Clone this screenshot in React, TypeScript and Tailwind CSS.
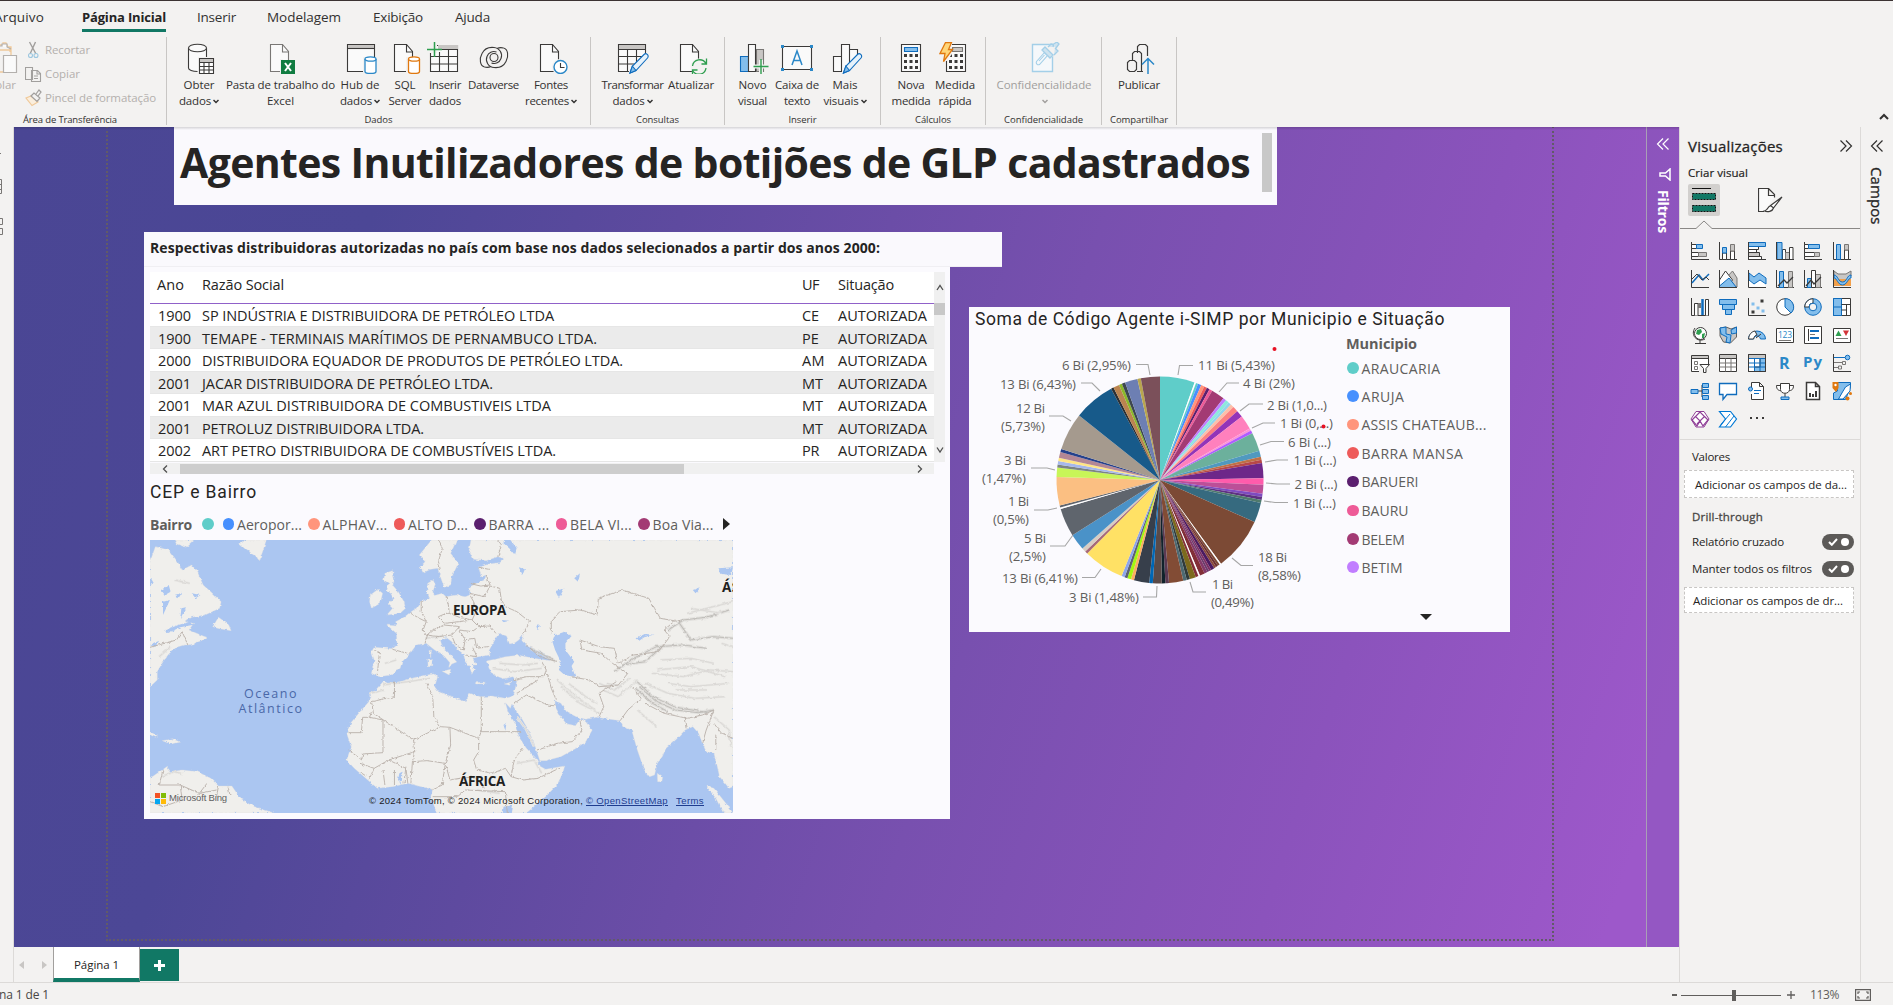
import { useLayoutEffect, useRef, useState, type ReactNode } from "react";

/* Single-line label whose tracking is adjusted so that it spans `w` pixels. */
function Fit({ w, children, className = "" }: { w: number; children: string; className?: string }) {
  const ref = useRef<HTMLSpanElement>(null);
  const [ls, setLs] = useState(0);
  useLayoutEffect(() => {
    const el = ref.current;
    if (!el) return;
    const natural = el.getBoundingClientRect().width - ls * children.length;
    setLs((w - natural) / children.length);
  }, [w, children]);
  return (
    <span ref={ref} className={"inline-block self-center whitespace-pre " + className} style={{ letterSpacing: ls }}>
      {children}
    </span>
  );
}

const K = "#3b3a39";
const B = "#0f6cbd";
const L = "#83beec";
const G = "#c8c6c4";

/* ---------- Ribbon icons (32 x 32) ---------- */
function Ico({ children, dx = "" }: { children: ReactNode; dx?: string }) {
  return (
    <svg width="32" height="32" viewBox="0 0 32 32" fill="none" stroke={K} strokeWidth="1.1" className={"shrink-0 " + dx}>
      {children}
    </svg>
  );
}
const Page = ({ x = 2, c = K }: { x?: number; c?: string }) => (
  <g transform={`translate(${x} 0)`} stroke={c}>
    <path d="M1.5 2.5h12l6 7v20h-18z" fill="#fafafa" />
    <path d="M13.5 2.5v7.500h6" />
  </g>
);
const Cyl = ({ x, c }: { x: number; c: string }) => (
  <g transform={`translate(${x} 0)`} stroke={c} strokeWidth="1.3">
    <path d="M1 17v12.500c0 1.200 2.600 2 5.500 2s5.500-.8 5.500-2V17" fill="#fff" />
    <ellipse cx="6.500" cy="17" rx="5.500" ry="2.200" fill="#fff" />
  </g>
);
const pencil = (
  <g stroke={B}>
    <path d="M14 31l2.500-7L28 12.500c2-2 5.500.5 3.500 3.500L20 28.500z" fill="#e6f2fb" />
    <path d="M14 31l2.300-7 3.700 4.500z" fill={L} />
  </g>
);
const icons: Record<string, ReactNode> = {
  obter: (
    <Ico>
      <path d="M5.500 6v20c0 2 4 3.500 9 3.500h9.500V6" fill="#fafafa" stroke="none" />
      <path d="M5.500 6v20c0 2 4 3.500 9 3.500M23.500 6v9" />
      <ellipse cx="14.500" cy="6" rx="9" ry="3.800" fill="#fafafa" />
      <path d="M15 15h17v17H15z" fill="#f3f2f1" stroke="none" />
      <path d="M16.500 16.500h14v15h-14z" fill="#fff" />
      <path d="M17 17h13v3H17z" fill={G} stroke="none" />
      <path d="M16.500 20.500h14M16.500 24.500h14M16.500 28h14M21 20v11.500M26 20v11.500" />
    </Ico>
  ),
  excel: (
    <Ico dx="translate-x-[3px]">
      <Page x={1} c="#797775" />
      <path d="M12 17h3v14h-3z" fill="#f3f2f1" stroke="none" />
      <path d="M13 18h14v14H13z" fill="#107c41" stroke="none" />
      <path d="M17 21l6 8M23 21l-6 8" stroke="#fff" strokeWidth="2" />
    </Ico>
  ),
  hub: (
    <Ico dx="translate-x-[2px]">
      <path d="M1.500 2.500h27v27h-27z" fill="#fafafa" />
      <path d="M2 3h26v3.500H2z" fill={G} stroke="none" />
      <path d="M1.500 6.500h27" />
      <path d="M17 15h15v17H17z" fill="#f3f2f1" stroke="none" />
      <Cyl x={18} c="#2b88c8" />
    </Ico>
  ),
  sql: (
    <Ico dx="translate-x-[2px]">
      <Page x={2} />
      <path d="M15 15h15v17H15z" fill="#f3f2f1" stroke="none" />
      <Cyl x={16.500} c="#e0780f" />
    </Ico>
  ),
  inserir: (
    <Ico dx="-translate-x-[2px]">
      <path d="M3.500 3.500h27v26h-27z" fill="#fafafa" />
      <path d="M11 3h20v4H11z" fill={G} stroke="none" />
      <path d="M12 7.500h18.500M3.500 14.500h27M3.500 22h27M12.500 10v19.500M21.500 7.500v22" />
      <path d="M0 1h10v10H0z" fill="#f3f2f1" stroke="none" />
      <path d="M7.500 0v15M0 7.500h15" stroke="#2e9e4f" strokeWidth="1.500" />
    </Ico>
  ),
  dataverse: (
    <Ico>
      <path d="M25.500 6C30 7 31 14 28 19.500c-2.500 5-7.500 6.500-12 6C10.500 25 7 19.500 9 14.500c1.500-4 5.500-6 9.500-4.500M6.500 25C2 24 1 17 4 11.500c2.500-5 7.500-6.500 12-6 5.500.5 9 6 7 11-1.500 4-5.500 6-9.500 4.500" />
      <path d="M25.500 6c-3-.8-5-.2-6.500.500M6.500 25c3 .8 5 .2 6.500-.5" />
      <circle cx="16" cy="15.500" r="4" />
    </Ico>
  ),
  fontes: (
    <Ico dx="translate-x-[3px]">
      <Page x={1} />
      <circle cx="22" cy="25" r="8" fill="#f3f2f1" stroke="none" />
      <circle cx="22.500" cy="25" r="6.500" fill="#fff" stroke="#2b88c8" strokeWidth="1.400" />
      <path d="M22.500 21v4.500h4" />
    </Ico>
  ),
  transformar: (
    <Ico>
      <path d="M1.500 2.500h27v27h-27z" fill="#fafafa" />
      <path d="M2 3h26v4H2z" fill={G} stroke="none" />
      <path d="M1.500 7.500h27M1.500 14.500h27M1.500 22h27M10.500 7.500v22M19.500 7.500v22" />
      <path d="M30 10L12 28v4h20z" fill="#f3f2f1" stroke="none" />
      <g transform="translate(-1 0)">{pencil}</g>
    </Ico>
  ),
  atualizar: (
    <Ico dx="translate-x-[2px]">
      <Page x={2} />
      <circle cx="22" cy="25" r="8.500" fill="#f3f2f1" stroke="none" />
      <path d="M15.500 24c1-7 10-8.500 13.500-2.500M29.500 16.500v5.500h-5M29 26c-1 7-10 8.500-13.500 2.500M15.500 33v-5h5" stroke="#2e9e4f" strokeWidth="1.300" />
    </Ico>
  ),
  novo: (
    <Ico>
      <path d="M19.500 7.500h7v22h-7z" fill={G} stroke="#797775" />
      <path d="M3.500 14.500h8v15h-8z" fill={L} stroke={B} />
      <path d="M11.500 2.500h7v27h-7z" fill="#fafafa" />
      <path d="M24 18v14M17 24.500h15" stroke="#f3f2f1" strokeWidth="4" />
      <path d="M24 17v15M16.500 24.500h15" stroke="#2e9e4f" strokeWidth="1.400" />
    </Ico>
  ),
  caixa: (
    <Ico>
      <path d="M1.500 4.500h29v23h-29z" fill="#fafafa" />
      <path d="M11 23l5-14 5 14M12.800 18.500h6.500" stroke="#2b88c8" strokeWidth="1.500" />
      <path d="M0 3h3v3H0zM29 3h3v3h-3zM0 26h3v3H0zM29 26h3v3h-3z" fill="#2b88c8" stroke="none" />
    </Ico>
  ),
  mais: (
    <Ico dx="translate-x-[2px]">
      <path d="M2.500 14.500h8v15h-8zM18.500 7.500h8v22h-8zM10.500 2.500h8v27h-8z" fill="#fafafa" />
      <path d="M30 10L11 29v3h21z" fill="#f3f2f1" stroke="none" />
      <g transform="translate(-1.500 0)">{pencil}</g>
    </Ico>
  ),
  nova: (
    <Ico>
      <path d="M6.500 2.500h19v27h-19z" fill="#fafafa" />
      <path d="M9.500 5.500h13v4h-13z" fill={L} stroke={B} />
      <path d="M9 12h3v3H9zm5.500 0h3v3h-3zm5.500 0h3v3h-3zM9 18h3v3H9zm5.500 0h3v3h-3zm5.500 0h3v3h-3zM9 24h3v3H9zm5.500 0h3v3h-3zm5.500 0h3v3h-3z" fill={K} stroke="none" />
    </Ico>
  ),
  rapida: (
    <Ico>
      <path d="M7.500 2.500h19v27h-19z" fill="#fafafa" />
      <path d="M13.500 5.500h10v4h-10z" fill={G} stroke="#797775" />
      <path d="M10 12h3v3h-3zm5.500 0h3v3h-3zm5.500 0h3v3h-3zM10 18h3v3h-3zm5.500 0h3v3h-3zm5.500 0h3v3h-3zM10 24h3v3h-3zm5.500 0h3v3h-3zm5.500 0h3v3h-3z" fill={K} stroke="none" />
      <path d="M0 0h13v12l-5 7H0z" fill="#f3f2f1" stroke="none" />
      <path d="M6.500.5h6l-3 7h4L4.500 19.500l1.500-8H1z" fill="#ffd679" stroke="#e0780f" strokeWidth="1.300" />
    </Ico>
  ),
  conf: (
    <Ico>
      <g stroke="#a3cfe8">
        <path d="M4.500 2.500h20v27h-20z" fill="#f5f8fb" strokeWidth="1.400" />
        <path d="M14 6l12-5 5 9-10 7z" fill="#f3f2f1" stroke="none" />
        <path d="M8.500 19.500l8-9 3 3-8 9c-2 1-4-1-3-3zM11 19l5.500-6" />
        <path d="M17 5l8 8-3 3-8-8zM20 5l3-3c2 0 3 1 2 3M24 3l5-3 2 2-3 4M27 6l3 3-4 4" fill="#cfe3ef" strokeWidth="1.300" />
      </g>
    </Ico>
  ),
  publicar: (
    <Ico>
      <path d="M14.500 11V4.500l2-2h6l2 2V14M9.500 18v-6.500l2-2h5l2 2V29M4.500 27.500v-7l2-2h5l2 2v7l-2 2h-5zM14 29.500h6" strokeWidth="1.200" />
      <path d="M25 32V17M19 22.500l6-6 6 6" stroke="#2b88c8" strokeWidth="1.500" />
    </Ico>
  ),
};

const Chev = ({ dim = false }: { dim?: boolean }) => (
  <svg width="6" height="5" viewBox="0 0 6 5" fill="none" stroke={dim ? "#a19f9d" : "#323130"} strokeWidth="1.400" className="ml-[2px] shrink-0">
    <path d="M.5 1L3 3.600 5.500 1" />
  </svg>
);

type Item = { icon: string; box: string; a: [string, number]; b?: [string, number]; chev?: boolean; dim?: boolean };
type Group = { label: [string, number]; w: string; items: Item[] };
const groups: Group[] = [
  {
    label: ["Dados", 28], w: "w-[424px]",
    items: [
      { icon: "obter", box: "ml-[10px] w-[44px]", a: ["Obter", 31], b: ["dados", 32], chev: true },
      { icon: "excel", box: "ml-[5px] w-[109px]", a: ["Pasta de trabalho do", 109], b: ["Excel", 27] },
      { icon: "hub", box: "ml-[3px] w-[44px]", a: ["Hub de", 39], b: ["dados", 32], chev: true },
      { icon: "sql", box: "ml-[6px] w-[34px]", a: ["SQL", 21], b: ["Server", 33] },
      { icon: "inserir", box: "ml-[6px] w-[34px]", a: ["Inserir", 32], b: ["dados", 32] },
      { icon: "dataverse", box: "ml-[6px] w-[51px]", a: ["Dataverse", 51] },
      { icon: "fontes", box: "ml-[5px] w-[54px]", a: ["Fontes", 34], b: ["recentes", 44], chev: true },
    ],
  },
  {
    label: ["Consultas", 43], w: "w-[134px]",
    items: [
      { icon: "transformar", box: "ml-[10px] w-[63px]", a: ["Transformar", 62], b: ["dados", 32], chev: true },
      { icon: "atualizar", box: "ml-[4px] w-[46px]", a: ["Atualizar", 46] },
    ],
  },
  {
    label: ["Inserir", 28], w: "w-[156px]",
    items: [
      { icon: "novo", box: "ml-[13px] w-[29px]", a: ["Novo", 28], b: ["visual", 29] },
      { icon: "caixa", box: "ml-[8px] w-[44px]", a: ["Caixa de", 44], b: ["texto", 26] },
      { icon: "mais", box: "ml-[4px] w-[44px]", a: ["Mais", 25], b: ["visuais", 35], chev: true },
    ],
  },
  {
    label: ["Cálculos", 36], w: "w-[105px]",
    items: [
      { icon: "nova", box: "ml-[10px] w-[40px]", a: ["Nova", 27], b: ["medida", 39] },
      { icon: "rapida", box: "ml-[4px] w-[40px]", a: ["Medida", 40], b: ["rápida", 33] },
    ],
  },
  {
    label: ["Confidencialidade", 79], w: "w-[116px]",
    items: [{ icon: "conf", box: "ml-[10px] w-[96px]", a: ["Confidencialidade", 95], b: ["", 0], chev: true, dim: true }],
  },
  { label: ["Compartilhar", 58], w: "w-[75px]", items: [{ icon: "publicar", box: "ml-[16px] w-[42px]", a: ["Publicar", 42] }] },
];

function Ribbon() {
  return (
    <header className="relative z-20 flex h-[127px] flex-col overflow-hidden border-t border-[#3b3333] bg-[#f3f2f1] text-[#323130]">
      <nav className="flex h-[31px] shrink-0 text-[13.5px] leading-[33px]">
        <div className="ml-[-6px] w-[88px]"><Fit w={50}>Arquivo</Fit></div>
        <div className="w-[115px]">
          <div className="h-[31px] w-[84px] border-b-[3px] border-[#117865] font-bold leading-[32px] text-[#252423]"><Fit className="text-[13px]" w={84}>Página Inicial</Fit></div>
        </div>
        <div className="w-[70px]"><Fit w={39}>Inserir</Fit></div>
        <div className="w-[106px]"><Fit w={74}>Modelagem</Fit></div>
        <div className="w-[82px]"><Fit w={50}>Exibição</Fit></div>
        <div><Fit w={35}>Ajuda</Fit></div>
      </nav>
      <div className="mt-[5px] flex h-[88px] shrink-0 text-[11.5px] leading-4">
        <section className="flex w-[167px] flex-col border-r border-[#c8c6c4]">
          <div className="flex h-[77px] shrink-0 text-[#b3b0ad]">
            <div className="w-[28px]">
              <svg width="18" height="38" viewBox="0 0 18 38" fill="none" className="mt-[4px]">
                <path d="M0 4h3V2h3l2 4h2v5M0 9h10M0 31h3M8 6h3v8" stroke="#f0c99a" strokeWidth="1.300" />
                <path d="M0 5h2V3h5v3l4 2M3.500 14.500h13v17h-13z" fill="#fafafa" stroke="#b3b0ad" strokeWidth="1.200" />
              </svg>
              <div className="-ml-[12px] -mt-[3px] leading-[18px]"><Fit w={28}>Colar</Fit></div>
            </div>
            <div className="flex flex-col">
              <div className="flex h-[25px] items-center">
                <svg width="17" height="18" viewBox="0 0 17 18" fill="none" strokeWidth="1.100">
                  <path d="M1.500 1L8 13M7.500 1L2 13" stroke="#a19f9d" strokeWidth="1.400" />
                  <circle cx="2.500" cy="14.500" r="2" stroke="#9cc7e0" /><circle cx="8" cy="14.500" r="2" stroke="#9cc7e0" />
                </svg>
                <Fit w={45}>Recortar</Fit>
              </div>
              <div className="flex h-[24px] items-center">
                <svg width="20" height="18" viewBox="0 0 20 18" fill="#f3f2f1" stroke="#a19f9d" strokeWidth="1.100" className="-ml-[3px]">
                  <path d="M.5 2.500h7v12h-7zM6.500 5.500h6l3 3v8h-9zM12 5.500v3.500h3.500M9 11h4M9 13.500h4" />
                </svg>
                <Fit w={35}>Copiar</Fit>
              </div>
              <div className="flex h-[24px] items-center">
                <svg width="20" height="18" viewBox="0 0 20 18" fill="none" strokeWidth="1.200" className="-ml-[3px]">
                  <path d="M1 9l5-2 7 6-6 3.500z" stroke="#f0c99a" fill="#faeedd" /><path d="M6 7l3-3 6 5-3 3.500zM11 5l3-4 2 2-3 4" stroke="#a19f9d" fill="#f3f2f1" />
                </svg>
                <Fit w={111}>Pincel de formatação</Fit>
              </div>
            </div>
          </div>
          <div className="flex h-[12px] shrink-0 pl-[23px] text-[9.5px] leading-[12px]"><Fit w={94}>Área de Transferência</Fit></div>
        </section>
        {groups.map((g) => (
          <section key={g.label[0]} className={"flex shrink-0 flex-col border-r border-[#c8c6c4] " + g.w}>
            <div className="flex h-[77px] shrink-0 pt-[5px]">
              {g.items.map((it) => (
                <div key={it.icon} className={"flex shrink-0 flex-col items-center " + it.box + (it.dim ? " text-[#a19f9d]" : "")}>
                  {icons[it.icon]}
                  <div className="mt-[3px] flex h-4"><Fit w={it.a[1]}>{it.a[0]}</Fit></div>
                  {it.b && (
                    <div className="flex h-4 items-center">
                      {it.b[0] && <Fit w={it.b[1]}>{it.b[0]}</Fit>}
                      {it.chev && <Chev dim={it.dim} />}
                    </div>
                  )}
                </div>
              ))}
            </div>
            <div className="flex h-[12px] shrink-0 justify-center text-[9.5px] leading-[12px]"><Fit w={g.label[1]}>{g.label[0]}</Fit></div>
          </section>
        ))}
        <div className="flex flex-1 items-end justify-end pb-[4px] pr-[4px]">
          <svg width="10" height="8" viewBox="0 0 10 8" fill="none" stroke="#323130" strokeWidth="2"><path d="M1 6l4-4 4 4" /></svg>
        </div>
      </div>
    </header>
  );
}

/* ---------- Table visual ---------- */
const rows: [string, string, number, string][] = [
  ["1900", "SP INDÚSTRIA E DISTRIBUIDORA DE PETRÓLEO LTDA", 352, "CE"],
  ["1900", "TEMAPE - TERMINAIS MARÍTIMOS DE PERNAMBUCO LTDA.", 395, "PE"],
  ["2000", "DISTRIBUIDORA EQUADOR DE PRODUTOS DE PETRÓLEO LTDA.", 421, "AM"],
  ["2001", "JACAR DISTRIBUIDORA DE PETRÓLEO LTDA.", 291, "MT"],
  ["2001", "MAR AZUL DISTRIBUIDORA DE COMBUSTIVEIS LTDA", 349, "MT"],
  ["2001", "PETROLUZ DISTRIBUIDORA LTDA.", 222, "MT"],
  ["2002", "ART PETRO DISTRIBUIDORA DE COMBUSTÍVEIS LTDA.", 354, "PR"],
];
const Arrow = ({ d }: { d: string }) => (
  <svg width="10" height="10" viewBox="0 0 10 10" fill="none" stroke="#505050" strokeWidth="1.300"><path d={d} /></svg>
);

function Table() {
  return (
    <div className="ml-[6px] mt-[5px] w-[795px] text-[14.5px] text-[#252423]">
      <div className="flex h-[190px]">
        <div className="w-[784px] bg-white">
          <div className="flex h-[32px] border-b border-[#9061c9] pl-[7px] leading-[25px]">
            <div className="flex h-[25px] w-[45px]"><Fit w={27}>Ano</Fit></div>
            <div className="flex h-[25px] w-[600px]"><Fit w={82}>Razão Social</Fit></div>
            <div className="flex h-[25px] w-[36px]"><Fit w={17}>UF</Fit></div>
            <div className="flex h-[25px]"><Fit w={56}>Situação</Fit></div>
          </div>
          {rows.map((r, i) => (
            <div key={r[1]} className={"flex h-[22.5px] border-b border-[#e6e6e6] pl-[8px] leading-[23px] " + (i % 2 ? "bg-[#ebebeb]" : "bg-white")}>
              <div className="w-[44px]"><Fit w={33}>{r[0]}</Fit></div>
              <div className="w-[600px]"><Fit w={r[2]}>{r[1]}</Fit></div>
              <div className="w-[36px]"><Fit w={r[3] === "AM" ? 23 : r[3] === "MT" ? 21 : 17}>{r[3]}</Fit></div>
              <div><Fit w={89}>AUTORIZADA</Fit></div>
            </div>
          ))}
        </div>
        <div className="flex w-[11px] flex-col items-center bg-[#f0f0f0]">
          <div className="flex h-[31px] items-center"><Arrow d="M2 7l3-4.500L8 7" /></div>
          <div className="h-[12px] w-full bg-[#c8c8c8]" />
          <div className="mt-auto pb-[7px]"><Arrow d="M2 2.500L5 7l3-4.500" /></div>
        </div>
      </div>
      <div className="mt-[1px] flex h-[11px] w-[784px] items-center bg-[#f0f0f0]">
        <div className="flex w-[30px] shrink-0 justify-center"><Arrow d="M7 1.500L3.500 5 7 8.500" /></div>
        <div className="h-[10px] w-[504px] shrink-0 bg-[#cdcdcd]" />
        <div className="ml-auto mr-[9px]"><Arrow d="M3 1.500L6.500 5 3 8.500" /></div>
      </div>
    </div>
  );
}

/* ---------- Map visual ---------- */
const mainland =
  "M865 30L860 60L872 88L905 92L935 80L950 85L938 98L912 102L885 112L892 140L905 135L900 150L880 160L862 170L862 195L850 200L825 195L800 200L790 190L772 196L765 186L772 165L766 150L752 160L750 185L757 205L735 215L722 235L705 248L690 262L668 275L672 288L645 285L655 295L670 310L672 345L660 356L612 352L605 365L612 390L605 430L625 440L655 435L680 415L685 395L705 372L722 345L748 340L770 360L795 378L810 398L806 415L815 402L828 396L812 375L790 350L785 330L800 322L815 335L830 358L845 372L850 395L862 412L868 434L874 420L870 405L880 405L870 385L885 380L915 375L912 362L920 345L930 325L938 310L958 318L966 342L980 338L990 330L1002 312L998 332L1010 345L1035 360L1065 375L1072 392L1030 385L990 376L955 380L935 386L908 392L912 415L925 435L950 446L975 440L985 455L978 490L970 500L955 505L920 498L890 500L862 490L850 515L815 500L780 485L770 470L778 440L768 432L750 435L710 445L660 462L635 455L620 475L600 500L598 515L575 545L550 580L540 610L552 650L540 690L560 715L590 745L620 775L660 770L700 760L735 770L765 778L760 800L768 825L775 849L1010 849L1060 800L1090 765L1105 730L1110 708L1060 718L1045 708L1035 685L1010 655L990 620L980 580L962 545L955 518L968 535L972 522L985 545L1000 570L1015 600L1030 640L1045 692L1060 692L1100 680L1140 655L1165 635L1182 600L1165 575L1150 568L1138 587L1115 582L1100 560L1085 530L1085 512L1100 520L1115 545L1140 560L1165 568L1195 562L1210 565L1255 572L1262 590L1285 600L1290 620L1300 660L1318 720L1332 740L1345 735L1352 700L1365 680L1375 655L1400 630L1425 600L1445 590L1460 610L1470 640L1480 665L1500 670L1507 700L1515 740L1540 775L1550 770V30Z";
const lands = [
  mainland,
  "M26 95L40 50L75 60L98 95L110 120L135 105L150 125L165 165L185 185L212 215L208 235L170 255L135 262L118 275L140 280L128 300L165 318L175 322L160 332L130 345L115 345L95 352L75 372L60 395L45 425L45 450L26 470Z",
  "M190 290L205 262L215 270L232 285L238 302L215 298Z",
  "M90 30L140 30L120 52L95 42Z",
  "M260 42L272 30L330 30L322 60L312 92L300 75L280 62Z",
  "M640 130L660 122L665 150L660 165L675 185L690 215L694 235L680 250L645 255L660 235L648 222L662 205L655 190L645 182L650 160L637 150Z",
  "M602 195L622 178L634 190L628 220L605 235L600 215Z",
  "M762 30L828 30L812 70L832 100L815 140L812 165L795 172L785 140L778 115L760 118L740 128L732 110L745 95L730 75Z",
  "M790 424L812 418L808 435Z",
  "M752 388L764 386L762 410L753 410Z",
  "M755 362L762 360L760 380Z",
  "M876 458L900 456L902 461L878 462Z",
  "M952 462L970 456L966 466Z",
  "M1352 730L1366 742L1364 755L1353 755Z",
  "M1480 768L1500 775L1535 825L1550 849L1525 849L1505 805Z",
  "M26 745L45 730L70 710L80 725L110 720L150 725L185 745L205 768L240 768L262 805L300 830L350 849L26 849Z",
  "M58 632L85 626L104 636L80 642Z",
  "M26 605L46 618L40 622L26 614Z",
];
const waters = [
  "M1085 315L1110 305L1128 318L1112 340L1112 360L1135 395L1128 408L1138 440L1115 440L1095 420L1100 395L1085 360L1078 335Z",
  "M968 30L985 55L980 75L965 55L950 40L952 30Z",
  "M1298 325L1322 312L1345 314L1318 322L1305 332Z",
  "M1085 182L1108 176L1095 205Z",
  "M1135 145L1150 130L1145 155Z",
  "M990 112L1006 118L1000 134Z",
  "M1035 290L1045 285L1040 302Z",
  "M1512 115L1550 112L1545 135L1520 132Z",
  "M1445 180L1466 172L1452 190Z",
  "M945 270L965 272L950 277Z",
  "M55 180L75 165L80 185L65 195Z",
  "M90 195L110 188L100 205Z",
  "M135 190L158 195L145 205Z",
  "M60 215L78 210L60 255Z",
  "M108 235L120 232L105 268Z",
  "M66 300L100 285L130 275L140 284L105 292L72 310Z",
  "M678 730L686 725L684 760L674 750Z",
  "M950 585L958 578L955 602Z",
  "M950 830L975 826L972 849L948 849Z",
  "M26 345L50 332L40 350Z",
  "M26 140L36 160L26 165Z",
];
const borders =
  "M780 30L790 55L780 95L785 120M935 30L945 45L935 80M885 112L912 118M860 160L890 168L915 165L905 135M862 190L900 200L915 168L940 175L945 215L955 230L985 245L1018 275L1012 290L1000 312M800 200L806 225L808 250L835 262L868 270L880 240L872 215L862 195M735 215L735 245L748 275L740 300L750 320L745 340M705 248L730 265L748 275M780 260L800 250L808 250M780 262L795 280L835 275L868 270L885 290L915 288L930 310M750 315L780 320L815 315L835 290L795 285L765 300ZM815 318L825 345L845 360L850 330L835 300L868 305L880 295M845 330L875 325L880 355L910 350M850 375L880 380L870 350M625 375L620 435M612 360L630 372M660 358L705 372M1075 310L1075 275L1100 245L1150 240L1195 255L1198 205L1260 180L1330 205L1345 235L1360 265L1410 275M1125 440L1175 450L1200 470L1250 465L1275 430L1235 400L1205 370L1155 360L1150 330L1200 350L1240 355L1250 400L1290 375L1355 365L1385 320L1370 300L1400 270M1010 345L1045 380L1090 395M1050 395L1062 420L1055 440L1010 440L975 450M1065 432L1075 475L1088 510M985 490L1040 450M978 520L1010 495L1065 525L1088 528M1040 660L1090 640L1130 635L1155 600L1150 572M1200 560L1212 530L1200 490L1245 455M1255 572L1275 540L1310 505L1285 470M1320 520L1370 550L1430 565L1470 555L1500 540M1425 560L1430 595M1500 540L1480 600L1470 640M1500 580L1520 610L1550 625M1505 615L1505 660M892 500L892 605L998 605M892 605L885 625L810 592L785 590L768 560L765 500L750 460M885 625L885 665L872 690L880 720M610 550L605 515L665 500L665 455M610 550L715 630L785 590M605 545L600 562L582 562L578 608L545 608M600 562L635 570L635 668L582 672L580 690L545 660M715 630L718 665L650 690L612 715L575 700M810 592L812 645L798 700L810 750L835 745M718 665L712 695L750 692L798 700M712 695L708 760M650 690L695 715L700 760M635 720L640 765M612 715L600 745L580 730M665 720L665 765M695 710L690 760M880 720L920 730L955 715L970 740L1000 750L1040 745L1095 715M970 740L978 690L1000 655M765 800L830 800L850 780L955 785L960 849M798 700L790 765L765 778M835 745L880 740L900 775M26 352L95 330L110 305L125 345M60 720L50 765L105 765L110 810L60 830M105 765L155 790L175 760M155 790L200 780M205 768L200 800M230 770L235 795M26 815L60 830";
const relief =
  "M1240 425L1290 385L1350 350L1420 345L1480 355M1260 405L1320 395L1370 345M1305 470L1350 515L1400 540L1460 548L1500 540M1295 450L1340 500L1400 532L1470 545M1380 300L1420 270L1480 262L1540 240M1410 280L1440 330L1500 320L1550 325M1020 355L1085 392M1295 475L1340 520L1380 545";
const softRelief =
  "M1320 460L1380 490L1450 505L1530 500M1340 430L1420 440L1490 420L1550 425M1090 450L1140 500L1190 540M1100 470L1150 520L1200 550M1120 460L1165 500L1195 520M920 415L980 425L1050 415M940 400L1000 405L1040 400M745 325L790 318M635 465L700 455L760 445M1360 390L1440 385L1500 400M1380 460L1440 470L1540 460M1210 480L1250 500L1300 450M1220 460L1260 470M55 740L90 725L110 730M985 700L1030 690L1050 730M1350 420L1440 410L1530 440M1200 460L1240 480L1280 445M1520 340L1550 350M1430 250L1550 215M1500 560L1540 600L1545 650M1440 235L1520 250M640 400L670 390M50 380L80 350M90 150L130 160M985 560L1010 600L1030 650M1300 540L1350 590M880 780L940 790M600 490L640 480M1400 480L1480 480";

function WorldMap() {
  return (
    <div className="relative ml-[6px] h-[273px] w-[583px] overflow-hidden bg-[#abc6f1]">
      <svg width="583" height="273" viewBox="26 30 1524 819" preserveAspectRatio="none" className="block">
        <filter id="coast" x="0" y="0" width="1" height="1">
          <feTurbulence type="fractalNoise" baseFrequency="0.090" numOctaves="3" seed="4" />
          <feDisplacementMap in="SourceGraphic" scale="9" xChannelSelector="R" yChannelSelector="G" />
        </filter>
        <g filter="url(#coast)">
          <path d="M0 0H1580V880H0z" fill="#abc6f1" />
          <g fill="#f0efec" stroke="#dcdde0" strokeWidth="1">
            {lands.map((d) => <path key={d} d={d} />)}
          </g>
          <path d={relief} fill="none" stroke="#dbdad7" strokeWidth="10" opacity="0.700" />
          <path d={relief} fill="none" stroke="#c0beba" strokeWidth="3" />
          <path d={softRelief} fill="none" stroke="#e6e5e2" strokeWidth="7" />
          <path d={softRelief} fill="none" stroke="#d6d4d1" strokeWidth="2" />
          <g fill="#abc6f1">{waters.map((d) => <path key={d} d={d} />)}</g>
          <path d={borders} fill="none" stroke="#bab2ab" strokeWidth="2.600" strokeLinejoin="round" />
        </g>
      </svg>
      <div className="absolute left-[303px] top-[58px] text-[13.500px] font-bold leading-6 text-[#1f1f1f]"><Fit w={53}>EUROPA</Fit></div>
      <div className="absolute left-[309px] top-[229px] text-[13.500px] font-bold leading-6 text-[#1f1f1f]"><Fit w={46}>ÁFRICA</Fit></div>
      <div className="absolute left-[572px] top-[35px] text-[13.500px] font-bold leading-6 text-[#1f1f1f]"><Fit w={32}>ÁSIA</Fit></div>
      <div className="absolute left-[80px] top-[146px] w-[82px] text-center text-[12.500px] leading-[15px] text-[#4a68a8]">
        <Fit w={54}>Oceano</Fit>
        <Fit w={65}>Atlântico</Fit>
      </div>
      <div className="absolute bottom-[9px] left-[5px] flex items-center gap-[3px]">
        <div className="grid grid-cols-2 gap-px">
          <i className="size-[5px] bg-[#f35325]" /><i className="size-[5px] bg-[#81bc06]" /><i className="size-[5px] bg-[#05a6f0]" /><i className="size-[5px] bg-[#ffba08]" />
        </div>
        <Fit w={58} className="font-['Liberation_Sans'] text-[9.500px] leading-[12px] text-[#60605f]">Microsoft Bing</Fit>
      </div>
      <div className="absolute bottom-[6px] left-[219px] flex font-['Liberation_Sans'] text-[9.500px] leading-[13px] text-[#1a1a1a]">
        <Fit w={217}>© 2024 TomTom, © 2024 Microsoft Corporation, </Fit>
        <Fit w={82} className="text-[#1f3d8f] underline">© OpenStreetMap</Fit>
        <Fit w={28} className="ml-[8px] text-[#1f3d8f] underline">Terms</Fit>
      </div>
    </div>
  );
}

const bairros: [string, string, number, string][] = [
  ["bg-[#5fcdc9]", "", 0, "ml-[10px]"],
  ["bg-[#4790fe]", "Aeropor...", 65, "ml-[9px]"],
  ["bg-[#ff957c]", "ALPHAV...", 65, "ml-[6px]"],
  ["bg-[#ee5a5a]", "ALTO D...", 60, "ml-[6px]"],
  ["bg-[#5b1f6f]", "BARRA ...", 61, "ml-[6px]"],
  ["bg-[#ee5b97]", "BELA VI...", 62, "ml-[6px]"],
  ["bg-[#a33a74]", "Boa Via...", 61, "ml-[6px]"],
];

/* ---------- Pie visual ---------- */
const slices: [number, string][] = [
  [19.5, "#5fcdc9"], [20.4, "#fff"], [21.6, "#5fcdc9"], [23.5, "#4790fe"], [25.3, "#ff957c"], [27, "#ee5a5a"], [28.6, "#5b1f6f"], [30.3, "#ee5b97"],
  [37.8, "#a33a74"], [39.6, "#c17dff"], [41.5, "#8ceadb"], [43.2, "#92d5ec"], [45.2, "#fdbfa8"], [48.3, "#fd8080"], [52.2, "#9334b8"], [60.1, "#ff80bd"],
  [61.5, "#ff92d6"], [63.2, "#b05cff"], [73.6, "#6cb09c"], [77, "#5099bf"], [78.7, "#bf7045"], [80.5, "#b84848"], [89, "#6e2789"], [92.6, "#ff5cac"],
  [97.7, "#bc4f98"], [99.4, "#7e4bc0"], [101.1, "#5e3082"], [102.9, "#4f7a6c"], [114, "#366a7f"], [143.9, "#7c4a35"], [144.8, "#fff"], [146, "#7c4a35"],
  [147.2, "#6b2f2f"], [148.4, "#8a4a3a"], [150.3, "#4a1a60"], [151.6, "#7c2f63"], [152.8, "#6c3a6b"], [154.5, "#83386a"], [157.3, "#822f38"], [158.2, "#fff"],
  [159.8, "#822f38"], [163.2, "#7d6a1d"], [165, "#303a3a"], [167, "#4e6a72"], [175, "#824c35"], [177, "#5a3a52"], [179, "#10222b"], [184, "#5a4a48"],
  [186, "#0067b5"], [194.6, "#373f4b"], [196.3, "#fdae5e"], [198.4, "#a5f610"], [200, "#5e6370"], [201.8, "#8ea5ea"], [224.7, "#ffe165"], [226.3, "#a66878"],
  [228.6, "#d8cdc3"], [237.8, "#4a92c8"], [253.7, "#5f656d"], [254.6, "#fff"], [255.8, "#5f656d"], [271.6, "#fbbf82"], [276.9, "#c8f558"], [278.6, "#7c8583"],
  [280.6, "#a6b8ec"], [282.4, "#ffe584"], [285.7, "#b38795"], [287.5, "#25418c"], [308.6, "#a59a8e"], [331.8, "#175a8a"], [333.3, "#2b2f33"], [336.7, "#bb8450"],
  [338.4, "#8cb829"], [340.3, "#3d4750"], [347.4, "#6d7fb3"], [349.3, "#b8a64f"], [360, "#7b505a"],
];
const PX = 191, PY = 173, PR = 103.5;
function arc(a: number, b: number) {
  const p = (t: number) => `${PX + PR * Math.sin((t * Math.PI) / 180)} ${PY - PR * Math.cos((t * Math.PI) / 180)}`;
  return `M${PX} ${PY}L${p(a)}A${PR} ${PR} 0 0 1 ${p(b)}Z`;
}
/* x, baseline y, width, text */
const pieLabels: [number, number, number, string][] = [
  [229, 64, 77, "11 Bi (5,43%)"], [274, 82, 52, "4 Bi (2%)"], [298, 103.500, 60, "2 Bi (1,0...)"], [311, 121.500, 53, "1 Bi (0,...)"], [319, 140.500, 43, "6 Bi (...)"],
  [324.500, 158.500, 43, "1 Bi (...)"], [325.500, 182.500, 43, "2 Bi (...)"], [324, 201.500, 43, "1 Bi (...)"], [289, 255.500, 29, "18 Bi"], [289, 273.500, 43, "(8,58%)"],
  [243, 282.500, 21, "1 Bi"], [242, 300.500, 43, "(0,49%)"], [100, 295.500, 70, "3 Bi (1,48%)"], [33, 276.500, 76, "13 Bi (6,41%)"], [55, 236.500, 22, "5 Bi"],
  [40, 254.500, 37, "(2,5%)"], [39, 199.500, 21, "1 Bi"], [24, 217.500, 36, "(0,5%)"], [35, 158.500, 22, "3 Bi"], [13, 176.500, 44, "(1,47%)"],
  [47, 106.500, 29, "12 Bi"], [32, 124.500, 44, "(5,73%)"], [31, 82.500, 76, "13 Bi (6,43%)"], [93, 63.500, 69, "6 Bi (2,95%)"],
];
const leaders =
  "M209 68L210.500 58.500H224M250 85L258 76H270M271 104L280 97H294M283 121L294 116H306M291 138L302 134.500H315M296 155L308 153H319M297 176L308 177H321M295 194L306 195.500H319M263 251L272 258.500H284M221 275L224 285H237M188 279L187.500 290H174M132 262L126 270.500H113M104 228L96 239H81M88 201L79 203H65M86 163L78 161H62M102 114L94 109H80M131 84L123 76H112M181 68L179 57.500H167";
const cities: [string, string, number, string][] = [
  ["bg-[#5fcdc9]", "ARAUCARIA", 79, "h-[28px]"], ["bg-[#4790fe]", "ARUJA", 43, "h-[28px]"], ["bg-[#ff957c]", "ASSIS CHATEAUB...", 125, "h-[29px]"], ["bg-[#ee5a5a]", "BARRA MANSA", 102, "h-[28px]"],
  ["bg-[#5b1f6f]", "BARUERI", 57, "h-[29px]"], ["bg-[#ee5b97]", "BAURU", 47, "h-[29px]"], ["bg-[#a33a74]", "BELEM", 43, "h-[28px]"], ["bg-[#c17dff]", "BETIM", 41, "h-[28px]"],
];

function PieCard() {
  return (
    <div className="absolute left-[955px] top-[180px] h-[325px] w-[541px] bg-[#fbfafe]">
      <div className="absolute left-[6px] top-0 font-[Roboto] text-[17.500px] leading-[25px] text-[#252423]"><Fit w={470}>Soma de Código Agente i-SIMP por Municipio e Situação</Fit></div>
      <svg width="541" height="325" viewBox="0 0 541 325" className="absolute inset-0">
        {slices.map(([b, c], i) => <path key={b} d={arc(i ? slices[i - 1][0] : 0, b)} fill={c} />)}
        <path d={leaders} fill="none" stroke="#a6a6a6" strokeWidth="1.100" />
        <g fill="#605e5c" fontSize="13.200" transform="translate(0 -0.800)">
          {pieLabels.map(([x, y, w, t]) => <text key={x + t} x={x} y={y} textLength={w}>{t}</text>)}
        </g>
        <circle cx="305.500" cy="42" r="2" fill="#e81123" />
        <circle cx="354.500" cy="119.500" r="2" fill="#e81123" />
        <path d="M451 307h12l-6 6z" fill="#252423" />
      </svg>
      <div className="absolute left-[377px] top-[27px] flex flex-col items-start text-[#605e5c]">
        <div className="flex h-[20px]"><Fit w={71} className="text-[14.500px] font-bold leading-[20px]">Municipio</Fit></div>
        {cities.map(([c, t, w, h]) => (
          <div key={t} className={"flex items-center gap-[3px] text-[14px] " + h}>
            <i className={"ml-px size-[11.500px] rounded-full " + c} />
            <Fit w={w}>{t}</Fit>
          </div>
        ))}
      </div>
    </div>
  );
}

function Canvas() {
  return (
    <main className="relative h-[820px] w-[1632px] shrink-0 overflow-hidden">
      <div className="absolute -top-px bottom-[6px] left-[92px] w-[1448px] border-2 border-t-0 border-dotted border-[#625a68]" />
      <div className="absolute left-[160px] top-0 flex h-[78px] w-[1103px] items-start bg-[#faf9fd] pl-[6px]">
        <Fit w={1070} className="self-start text-[41px] font-bold leading-[70px] text-[#252423]">Agentes Inutilizadores de botijões de GLP cadastrados</Fit>
        <div className="ml-auto mr-[5px] mt-[6px] h-[59px] w-[10px] bg-[#c8c8c8]" />
      </div>
      <div className="absolute left-[130px] top-[140px] flex h-[552px] w-[806px] flex-col bg-[#fbfafe]">
        <Table />
        <div className="ml-[6px] mt-[5px] h-[24px] font-[Roboto] text-[17.500px] leading-[26px] text-[#252423]"><Fit w={107}>CEP e Bairro</Fit></div>
        <div className="ml-[6px] mt-[9px] flex h-[24px] items-center text-[14px] text-[#605e5c]">
          <Fit w={42} className="font-bold">Bairro</Fit>
          {bairros.map(([c, t, w, m]) => (
            <div key={c} className={"flex items-center gap-[3px] " + m}>
              <i className={"size-[11.500px] rounded-full " + c} />
              {t && <Fit w={w}>{t}</Fit>}
            </div>
          ))}
          <svg width="7" height="12" viewBox="0 0 7 12" className="ml-[9px]"><path d="M0 0l7 6-7 6z" fill="#252423" /></svg>
        </div>
        <div className="mt-[4px]"><WorldMap /></div>
      </div>
      <div className="absolute left-[130px] top-[105px] h-[35px] w-[858px] border-b border-[#f0eff3] bg-[#faf9fd] pl-[6px] leading-[31px]">
        <Fit w={730} className="text-[14px] font-bold text-[#252423]">Respectivas distribuidoras autorizadas no país com base nos dados selecionados a partir dos anos 2000:</Fit>
      </div>
      <PieCard />
    </main>
  );
}

const Dbl = ({ flip = false, c = "#323130", cls = "" }: { flip?: boolean; c?: string; cls?: string }) => (
  <svg width="14" height="12" viewBox="0 0 14 12" fill="none" stroke={c} strokeWidth="1.200" className={cls}>
    {flip ? <path d="M1.500.5L7 6l-5.500 5.500M7 .5L12.500 6 7 11.500" /> : <path d="M12.500.5L7 6l5.500 5.500M7 .5L1.500 6 7 11.500" />}
  </svg>
);

function Filtros() {
  return (
    <aside className="flex h-[820px] w-[33px] shrink-0 flex-col items-center border-l border-[#a99fb5] bg-[#7d55b0]/25">
      <Dbl c="#fff" cls="mt-[11px]" />
      <svg width="12" height="13" viewBox="0 0 12 13" fill="none" stroke="#fff" strokeWidth="1.500" className="ml-[3px] mt-[18px]"><path d="M11 1v11L6.500 8H1V5h5.500z" /></svg>
      <div className="mt-[9px] text-[14px] font-bold leading-[18px] text-white [writing-mode:vertical-rl]">
        <span className="tracking-[-0.200px]">Filtros</span>
      </div>
    </aside>
  );
}

/* ---------- Visualization gallery (18 x 18 icons) ---------- */
const ax = <path d="M.5 0v17.500H18" />;
const gallery: ReactNode[] = [
  <>{ax}<path d="M.5 10.500h7v4h-7zM.5 2.500h5v4h-5z" fill="#fff" /><path d="M5.500 2.500h6v4h-6z" fill={L} stroke={B} /><path d="M7.500 10.500h8v4h-8z" fill={G} stroke="#797775" /></>,
  <>{ax}<path d="M3.500 11h4v6.500h-4zM11.500 9h4v8.500h-4z" fill="#fff" /><path d="M3.500 5.500h4V11h-4z" fill={L} stroke={B} /><path d="M11.500 2.500h4V9h-4z" fill={G} stroke="#797775" /></>,
  <><path d="M.5 4.500h10v3H.5zM.5 7.500h8v3H.5zM.5 14.500h13v3H.5z" fill="#fff" /><path d="M.5 10.500h11v4H.5z" fill={G} /><path d="M.5.5h17v4H.5z" fill={L} stroke={B} />{ax}</>,
  <><path d="M6.500 7.500h3v10h-3z" fill="#fff" /><path d="M9.500 10.500h4v7h-4z" fill={G} stroke="#797775" /><path d="M13.500 5.500h3.500v12h-3.500z" fill="#fff" /><path d="M1 .5h5v17H1z" fill={L} stroke={B} />{ax}</>,
  <>{ax}<path d="M.5 2.500h4v4h-4zM.5 10.500h10v4H.5z" fill="#fff" /><path d="M4.500 2.500h11v4h-11z" fill={L} stroke={B} /><path d="M10.500 10.500h5v4h-5z" fill={G} stroke="#797775" /></>,
  <>{ax}<path d="M11.500 8h4v9.500h-4z" fill="#fff" /><path d="M3.500 2.500h4v15h-4z" fill={L} stroke={B} /><path d="M11.500 2.500h4V8h-4z" fill={G} stroke="#797775" /></>,
  <>{ax}<path d="M1 13l7-8 4 5 6-6" stroke={B} strokeWidth="1.500" /><path d="M1 9l5-5 5 6 4-3 3 3" /></>,
  <><path d="M8 7l5.500-6L18 8v9H8z" fill={G} stroke="#797775" /><path d="M.5 10l6-9 7 9-6 7H.5z" fill="#fff" /><path d="M.5 17.500V16L10 8l7.500 9.500z" fill={L} stroke={B} />{ax}</>,
  <><path d="M1 17V10l5 2 6-5 5.500 4v6z" fill="#fff" stroke="none" /><path d="M1 3l5 4 5-4 7 5v6l-6-4-6 4-5-4z" fill={L} stroke={B} />{ax}</>,
  <>{ax}<path d="M3.500 1.500h4v16h-4z" fill={L} stroke={B} /><path d="M12.500 1.500h4v16h-4z" fill={G} stroke="#797775" /><path d="M2 16l6-6 3 3 6-6" strokeWidth="1.300" /></>,
  <>{ax}<path d="M3.500 8.500h4v9h-4z" fill={L} stroke={B} /><path d="M11.500 4.500h5v13h-5z" fill={G} stroke="#797775" /><path d="M7.500.5h4v17h-4z" fill="#fff" /><path d="M2 16l5-6 3 4 7-7" strokeWidth="1.300" /></>,
  <><path d="M1 1l4 3h8l5-3v5l-5 4H5L1 7z" fill={G} stroke="#797775" /><path d="M1 9h17v7H1z" fill="#f2a04a" stroke="none" /><path d="M1 5c4 0 4 7 8.500 7S14 5 18 5v3c-3 0-4 7-8.500 7S4 8 1 8z" fill={L} stroke={B} />{ax}</>,
  <>{ax}<path d="M3.500 17.500V5.500H7v12M14.500 17.500V1.500h3v16" fill="#fff" /><path d="M8.500 5v5" stroke="#797775" strokeWidth="3" /><path d="M11.500 1v16" stroke={B} strokeWidth="2.500" /></>,
  <><path d="M.5 1.500h17v5H.5zM3.500 6.500h12v5h-12zM6.500 11.500h6v5h-6z" fill={L} stroke={B} /></>,
  <>{ax}<path d="M12.500 1.500h3v3h-3zM3.500 12.500h3v3h-3z" fill={K} stroke="none" /><path d="M3.500 4.500h3v3h-3zM8.500 8.500h3v3h-3zM13.500 11.500h3v3h-3z" fill={L} stroke="none" /></>,
  <><circle cx="9" cy="9" r="8.300" fill="#fff" /><path d="M9 9V.7A8.300 8.300 0 0 1 15 15z" fill={L} stroke={B} /></>,
  <><circle cx="9" cy="9" r="8.300" fill={L} stroke={B} /><path d="M9 .7A8.300 8.300 0 0 0 .7 9H5a4 4 0 0 1 4-4z" fill="#fff" /><circle cx="9" cy="9" r="3.800" fill="#f3f2f1" stroke={B} /></>,
  <><path d="M.5.5h17v17H.5z" fill="#fff" /><path d="M.5.5h8v17h-8z" fill={L} stroke={B} /><path d="M.5 9h8" stroke={B} /><path d="M8.500 6.500h9M13.500 6.500v11M8.500 12h5" /></>,
  <><circle cx="9.500" cy="7.500" r="6" fill="#fff" /><path d="M4 2C-1 9 6 17 14 13M9 14v3M4 17.500h11" /><path d="M6 4l4-1 1 3-3 3-3-1zM11 8l3-1-1 5h-2z" fill="#2e9e4f" stroke="none" /></>,
  <><path d="M1 2l6-1 5 2 5.500-2v10l-6 6-7-1L1 10z" fill={G} stroke="#605e5c" /><path d="M1 2l6-1v7l5 1-1 8-4-1 1-5-6-3zM12 4l5.500-3v6l-5 1z" fill={L} stroke={B} /></>,
  <><path d="M.5 13a8.500 8 0 0 1 17 0h-5c-1-4-6-4-7 0z" fill={L} stroke={B} /><path d="M.5 13C1 8 4 5.500 7 5l2 4c-2 0-3 2-3.500 4zM8 12l5-4" fill="#fff" /></>,
  <><path d="M.5 2.500h17v14H.5z" fill="#fff" /><path d="M3 14.500h12" stroke="#797775" /><text x="2" y="12" fontSize="8.500" textLength="14" fill="#2b88c8" stroke="none">123</text></>,
  <><path d="M.5.5h17v17H.5z" fill="#fff" /><path d="M4.500 3v12" /><path d="M6 5h9M6 12h9" stroke={B} strokeWidth="2" /><path d="M6 8.500h5" stroke="#797775" /></>,
  <><path d="M.5 2.500h17v14H.5z" fill="#fff" /><path d="M2.500 10l3-5.500 3 5.500z" fill="#2e9e4f" stroke="none" /><path d="M10 4.500h6l-3 5.500z" fill="#d13438" stroke="none" /><path d="M3 12.500h12" stroke="#797775" /></>,
  <><path d="M.5 1.500h17v16H.5z" fill="#fff" /><path d="M1 2h16v2.500H1z" fill={G} stroke="none" /><path d="M.5 4.500h17" /><path d="M3.500 7.500h3v3h-3zM3.500 12.500h3v3h-3z" stroke="#797775" /><path d="M8 10h10v8H8z" fill="#f3f2f1" stroke="none" /><path d="M9 10.500h9.500l-3.500 4v4h-2.500v-4z" fill="#fff" /></>,
  <><path d="M.5.5h17v17H.5z" fill="#fff" /><path d="M1 1h16v3H1z" fill={G} stroke="none" /><path d="M.5 4.500h17" /><path d="M.5 9h17M.5 13h17M6.500 4.500v13M12 4.500v13" stroke="#797775" /></>,
  <><path d="M.5.5h17v17H.5z" fill="#fff" /><path d="M1 1h16v3H1z" fill={G} stroke="none" /><path d="M12 4.500h5.500v13H6.500v-4.500H12z" fill={L} /><path d="M.5 4.500h17M.5 9h17M.5 13h17M6.500 4.500v13M12 4.500v13" stroke={B} /><path d="M.5.5h17v17H.5z" /></>,
  <><text x="3" y="15" fontSize="16" fontWeight="700" textLength="10" fill="#2b88c8" stroke="none">R</text></>,
  <><text x="-1" y="13" fontSize="15" fontWeight="700" textLength="19" fill="#2b88c8" stroke="none">Py</text></>,
  <>{ax}<path d="M1 3.500h11" stroke={B} /><circle cx="14.500" cy="3.500" r="2.300" fill={L} stroke={B} /><path d="M1 8.500h9M1 13.500h4" stroke="#797775" /><path d="M9.500 7.500h3v3h-3zM5.500 12h3v3h-3z" stroke="#797775" /></>,
  <><path d="M7 9h4M11 3v12" /><path d="M0 7.500h7v4H0zM11.500 1.500h6v4h-6zM11.500 7.500h6v4h-6zM11.500 13.500h6v4h-6z" fill={L} stroke={B} /></>,
  <><path d="M.5 1.500h17v11H8l-4 5v-5H.5z" fill="#fff" stroke={B} strokeWidth="1.300" /></>,
  <><path d="M3.500 9V.5h8l4 4v13h-12V12M11.500.5v4h4" fill="#fff" /><circle cx="2.500" cy="7" r="2" fill={L} stroke={B} /><path d="M6 8.500h7M6 11.500h5" stroke={B} /></>,
  <><path d="M4.500 1.500h9v6c0 5-9 5-9 0zM4.500 3.500H.5c0 4 2 5 4 5M13.500 3.500h4c0 4-2 5-4 5M9 11.500v4" fill="#fff" /><path d="M5 15h8v2.500H5z" fill={L} stroke={B} /></>,
  <><path d="M2.500.5h9l4 4v13h-13zM11.500.5v4h4" fill="#fff" strokeWidth="1.500" /><path d="M6 15v-4M9 15v-3M12 15V9" strokeWidth="2" /></>,
  <><path d="M3 .5h14.500V5l-5 12.500H.5V11l4-2z" fill={L} stroke={B} /><path d="M17.500 2l-5 3-3 5-4 7H10l7-8z" fill="#fff" stroke={B} /><path d="M-.5 0h6v6L3 10-.5 6z" fill="#e0780f" stroke="none" /><circle cx="14.500" cy="16.500" r="2" fill="#e0780f" stroke="none" /><circle cx="17.500" cy="11.500" r="1.500" fill="#e0780f" stroke="none" /><circle cx="2.500" cy="3" r="1.200" fill="#fff" stroke="none" /></>,
  <g stroke="#8f3f97"><path d="M5 1.500h8l5 7.500-5 8H5L0 9z" fill="#fff" /><path d="M9 2L4.500 6.500 9 11l4.500-4.500zM4.500 6.500L1 10l5 6 3-5 3 5 5-6-3.500-3.500M9 11L6 14" strokeWidth="1.200" /></g>,
  <g stroke="#0078d4"><path d="M.5 1.500h11l6 7.500-6 8H.5l6-8z" fill="#fff" strokeWidth="1.200" /><path d="M2 14.500L11 4M6.500 17L15 6" /></g>,
  <g fill={K} stroke="none"><path d="M2 7h2v2H2zM8 7h2v2H8zM14 7h2v2h-2z" /></g>,
];

const Toggle = () => (
  <div className="flex h-4 w-8 items-center justify-between rounded-full bg-[#5c5a58] pl-[6px] pr-[5px]">
    <svg width="10" height="8" viewBox="0 0 10 8" fill="none" stroke="#fff" strokeWidth="2"><path d="M1 4l2.800 2.800L9 1" /></svg>
    <i className="size-[8px] rounded-full bg-white" />
  </div>
);

function Side() {
  return (
    <>
      <aside className="flex w-[182px] shrink-0 flex-col border-x border-[#dcdad8] text-[#252423]">
        <div className="flex h-[38px] items-center justify-between pl-[8px] pr-[7px]">
          <Fit w={95} className="text-[15px] [-webkit-text-stroke:0.300px]">Visualizações</Fit>
          <Dbl flip />
        </div>
        <div className="pl-[8px] text-[11.500px] leading-[16px] [-webkit-text-stroke:0.200px]"><Fit w={60}>Criar visual</Fit></div>
        <div className="mt-[3px] flex pl-[8px]">
          <div className="flex size-8 items-center justify-center rounded-[2px] bg-[#d2d0ce]">
            <svg width="24" height="24" viewBox="0 0 24 24" fill="#117865" stroke="#111"><path d="M0 .5h19" /><path d="M.5 5.500h23v6H.5zM.5 17.500h23v6H.5z" strokeDasharray="2 1" /></svg>
          </div>
          <svg width="25" height="25" viewBox="0 0 25 25" fill="none" stroke={K} strokeWidth="1.200" className="ml-[38px] mt-[4px]">
            <path d="M6 23.500H.5V.5h10l6 6v3M10.500.5v7h6" fill="#fafafa" /><path d="M24 9l-8.500 11-3-2.500zM12.500 18c-3 0-2 4-6 5 3 1.500 8 .5 9-3" fill="#fff" />
          </svg>
        </div>
        <svg width="180" height="9" viewBox="0 0 180 9" fill="none" stroke="#8a8886" className="mt-[4px]"><path d="M0 8.500h16l8-7.500 8 7.500h148" /></svg>
        <div className="ml-[11px] mt-[13px] grid w-[160px] grid-cols-6 gap-x-[10px] gap-y-[10px]">
          {gallery.map((g, i) => (
            <svg key={i} width="18" height="18" viewBox="0 0 18 18" fill="none" stroke={K} strokeWidth="1" className="overflow-visible">{g}</svg>
          ))}
        </div>
        <div className="mt-[11px] border-t border-[#dcdad8] pl-[12px] pt-[7px] text-[11.500px] leading-[20px]"><Fit w={38}>Valores</Fit></div>
        <div className="ml-[4px] mt-[3px] h-[28px] w-[170px] border border-dashed border-[#c8c6c4] bg-white pl-[10px] text-[11.500px] leading-[27px]"><Fit w={152}>Adicionar os campos de da...</Fit></div>
        <div className="mt-[9px] pl-[12px] text-[11.500px] leading-[20px] text-[#484644] [-webkit-text-stroke:0.300px]"><Fit w={71}>Drill-through</Fit></div>
        <div className="mt-[5px] flex h-[20px] items-center justify-between pl-[12px] pr-[6px] text-[11.500px]"><Fit w={92}>Relatório cruzado</Fit><Toggle /></div>
        <div className="mt-[7px] flex h-[20px] items-center justify-between pl-[12px] pr-[6px] text-[11.500px]"><Fit w={120}>Manter todos os filtros</Fit><Toggle /></div>
        <div className="ml-[4px] mt-[8px] h-[26px] w-[170px] border border-dashed border-[#c8c6c4] bg-white pl-[8px] text-[11.500px] leading-[25px]"><Fit w={150}>Adicionar os campos de dr...</Fit></div>
      </aside>
      <aside className="flex flex-1 flex-col items-center">
        <Dbl cls="mt-[13px]" />
        <div className="mt-[15px] text-[15px] leading-[18px] text-[#252423] [writing-mode:vertical-rl] [-webkit-text-stroke:0.300px]">
          <span className="tracking-[0.100px]">Campos</span>
        </div>
      </aside>
    </>
  );
}

export default function App() {
  return (
    <div className="flex h-[1005px] w-[1893px] flex-col overflow-hidden bg-[#f3f2f1] font-['Open_Sans','Noto_Sans',sans-serif]">
      <Ribbon />
      <div className="flex h-[855px] shrink-0">
        <aside className="w-[14px] shrink-0 overflow-hidden border-r border-[#dcdad8]">
          <svg width="6" height="120" viewBox="0 0 6 120" fill="none" stroke="#797775"><path d="M0 26.500h1M0 52.500h1.500v14H0M0 57.500h1M0 62.500h1M0 91.500h2.500v6H0M0 101.500h2.500v6H0" /></svg>
        </aside>
        <div className="flex w-[1665px] shrink-0 flex-col">
          <div className="relative flex h-[820px] bg-[linear-gradient(108deg,#4a4694_0%,#4c4796_20%,#5e4a9f_36%,#7850af_58%,#8b53bc_78%,#9d58ca_96%)]">
            <Canvas />
            <Filtros />
            <div className="absolute inset-x-0 top-0 h-[3px] bg-linear-to-b from-black/15 to-transparent" />
          </div>
          <div className="flex h-[35px]">
            <div className="flex w-[39px] items-center justify-between pl-[5px] pr-[6px]">
              <svg width="5" height="8" viewBox="0 0 5 8" fill="#c8c6c4"><path d="M5 0v8L0 4z" /></svg>
              <svg width="5" height="8" viewBox="0 0 5 8" fill="#c8c6c4"><path d="M0 0v8l5-4z" /></svg>
            </div>
            <div className="h-[35px] w-[87px] border-x border-b-4 border-x-[#a19f9d] border-b-[#117865] bg-white text-center text-[11.500px] leading-[35px] text-[#252423]"><Fit w={45}>Página 1</Fit></div>
            <div className="mt-[2px] flex h-8 w-[39px] items-center justify-center bg-[#117865]">
              <svg width="11" height="11" viewBox="0 0 11 11" stroke="#fff" strokeWidth="3"><path d="M5.500 0v11M0 5.500h11" /></svg>
            </div>
          </div>
        </div>
        <Side />
      </div>
      <footer className="flex h-[23px] items-center border-t border-[#dcdad8] pt-[2px] text-[12px] text-[#484644]">
        <div className="ml-[-24px]"><Fit w={73}>Página 1 de 1</Fit></div>
        <div className="ml-auto flex items-center text-[#605e5c]">
          <div className="h-[2px] w-[5px] bg-[#605e5c]" />
          <div className="ml-[4px] flex h-[12px] w-[100px] items-center bg-[linear-gradient(#605e5c,#605e5c)] bg-[length:100%_1px] bg-center bg-no-repeat"><div className="ml-[51px] h-[11px] w-[4px] bg-[#605e5c]" /></div>
          <svg width="8" height="8" viewBox="0 0 8 8" stroke="#605e5c" strokeWidth="1.300" className="ml-[6px]"><path d="M4 0v8M0 4h8" /></svg>
          <div className="ml-[15px] mr-[16px]"><Fit w={29}>113%</Fit></div>
          <svg width="16" height="12" viewBox="0 0 16 12" fill="none" stroke="#605e5c" strokeWidth="1.200" className="mr-[22px]"><path d="M.6.6h14.800v10.800H.6z" /><path d="M3 5V3h2M11 3h2v2M13 7v2h-2M5 9H3V7" /></svg>
        </div>
      </footer>
    </div>
  );
}
